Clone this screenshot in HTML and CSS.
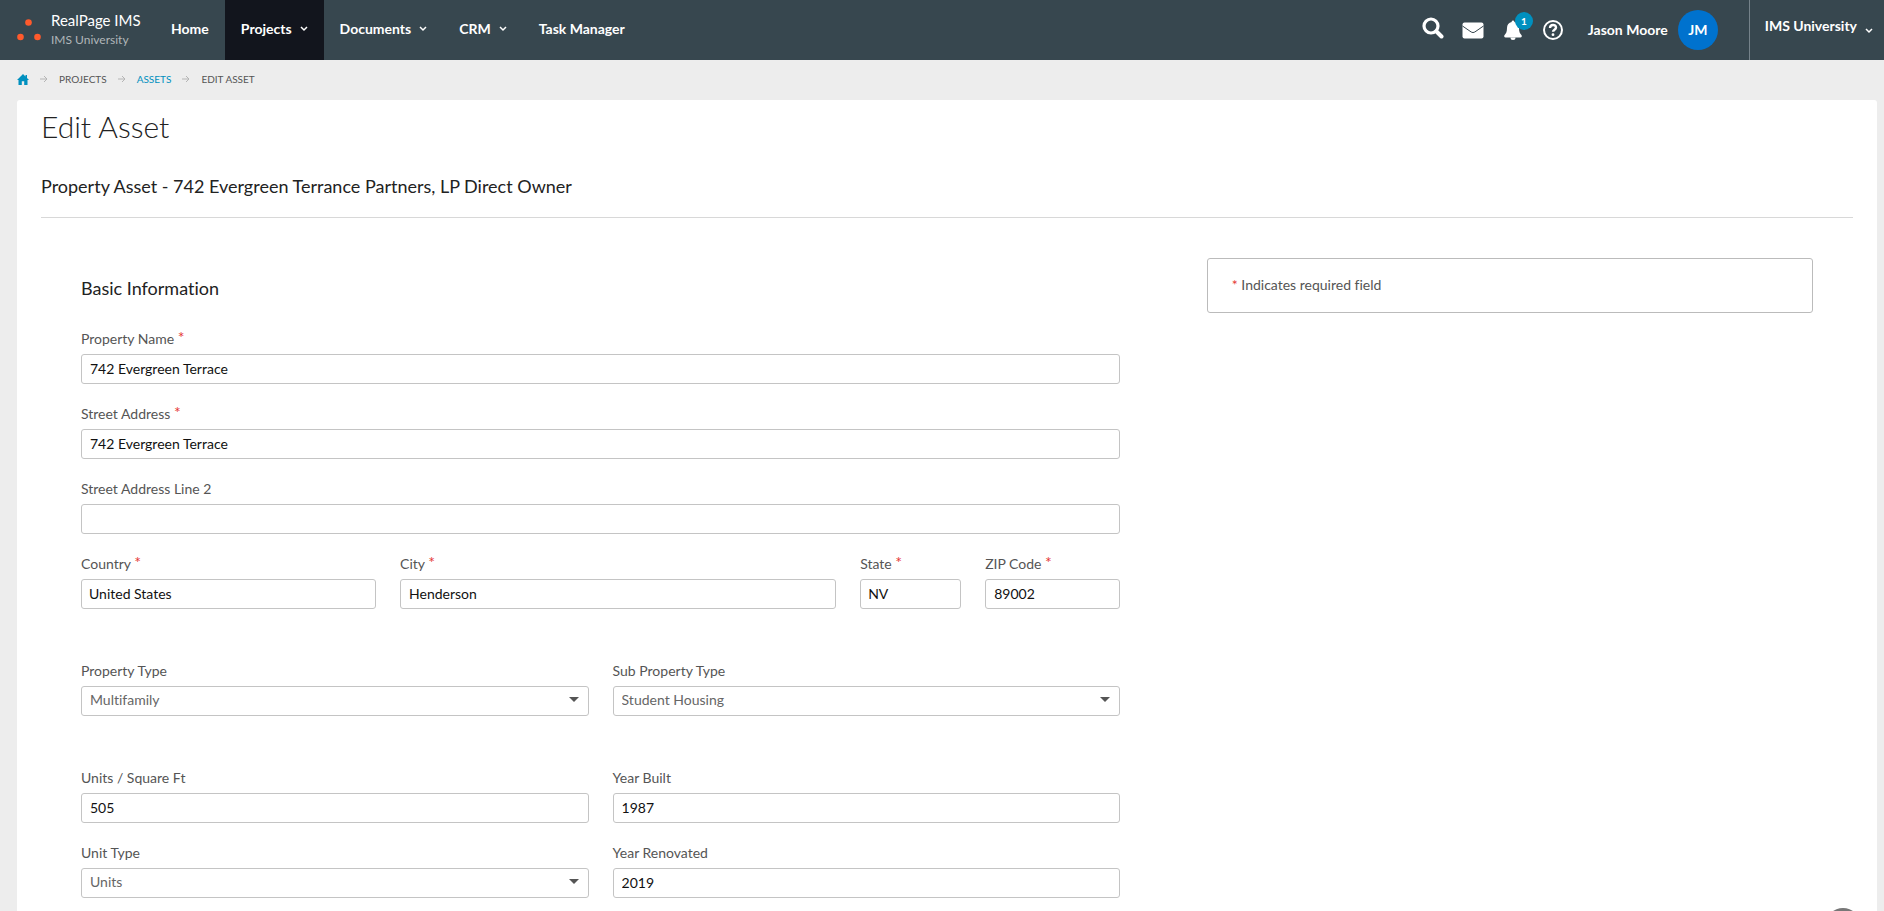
FILE: index.html
```html
<!DOCTYPE html>
<html lang="en">
<head>
    <meta charset="UTF-8">
    <meta name="viewport" content="width=device-width, initial-scale=1.0">
    <title>Edit Asset</title>
    <link rel="stylesheet" href="styles.css">
</head>
<body>

    <header class="topbar">
        <a class="brand" href="#">
            <svg class="brand-logo" width="24" height="24" viewBox="0 0 24 24" fill="#ff5a2c">
                <circle cx="11.5" cy="4.5" r="3.3"/>
                <circle cx="3.5" cy="19" r="3.3"/>
                <circle cx="20.5" cy="19" r="3.3"/>
            </svg>
            <span class="brand-text">
                <span class="brand-name">RealPage IMS</span>
                <span class="brand-sub">IMS University</span>
            </span>
        </a>

        <nav class="main-nav">
            <a class="nav-link" href="#">Home</a>
            <a class="nav-link active" href="#">Projects
                <svg class="chevron" width="8" height="6" viewBox="0 0 8 6"><path d="M1 1l3 3 3-3"/></svg>
            </a>
            <a class="nav-link" href="#">Documents
                <svg class="chevron" width="8" height="6" viewBox="0 0 8 6"><path d="M1 1l3 3 3-3"/></svg>
            </a>
            <a class="nav-link" href="#">CRM
                <svg class="chevron" width="8" height="6" viewBox="0 0 8 6"><path d="M1 1l3 3 3-3"/></svg>
            </a>
            <a class="nav-link" href="#">Task Manager</a>
        </nav>

        <div class="tools">
            <button class="icon-btn search" type="button" aria-label="Search">
                <svg width="22" height="22" viewBox="0 0 22 22" fill="none" stroke="#fff">
                    <circle cx="9" cy="9" r="7" stroke-width="3.2"/>
                    <path d="M14.5 14.5l5 5" stroke-width="4" stroke-linecap="round"/>
                </svg>
            </button>
            <button class="icon-btn" type="button" aria-label="Messages">
                <svg width="22" height="22" viewBox="0 0 22 22">
                    <rect x="0.5" y="3.5" width="21" height="16" rx="2" fill="#fff"/>
                    <path d="M0.5 7l8.7 6q1.800 1.200 3.600 0l8.700-6" fill="none" stroke="#37474f"/>
                </svg>
            </button>
            <button class="icon-btn" type="button" aria-label="Notifications">
                <svg width="22" height="22" viewBox="0 0 22 22" fill="#fff">
                    <path d="M11 1.500a1.300 1.300 0 0 0-1.300 1.600C6.800 3.700 5 6 5 9c0 4-1 5.500-2.400 7-.9 1-.3 2.500 1 2.500h14.800c1.300 0 1.900-1.500 1-2.500C18 14.500 17 13 17 9c0-3-1.800-5.300-4.700-5.900A1.300 1.300 0 0 0 11 1.500z"/>
                    <path d="M8.500 18.500h5a2.500 2.500 0 0 1-5 0z"/>
                </svg>
                <span class="badge">1</span>
            </button>
            <button class="icon-btn" type="button" aria-label="Help">
                <svg width="22" height="22" viewBox="0 0 22 22" fill="none" stroke="#fff">
                    <circle cx="11" cy="11" r="9" stroke-width="2"/>
                    <path d="M8 9c0-4 6-4 6-.5 0 2.200-3 2.200-3 4.300" stroke-width="2.4"/>
                    <circle cx="11" cy="15.700" r="1.4" fill="#fff" stroke="none"/>
                </svg>
            </button>
            <a class="user" href="#">Jason Moore <span class="avatar">JM</span></a>
            <a class="org" href="#">IMS University
                <svg class="chevron" width="8" height="6" viewBox="0 0 8 6"><path d="M1 1l3 3 3-3"/></svg>
            </a>
        </div>
    </header>

    <nav class="breadcrumb" aria-label="Breadcrumb">
        <a href="#" aria-label="Home page">
            <svg width="12" height="11" viewBox="0 0 12 11" fill="#0090bf"><path d="M6 0l2.500 2.400V1h1.500v2.900L12 6h-1.500v5H7.200V7.200H4.800V11H1.500V6H0z"/></svg>
        </a>
        <svg class="arrow" width="8" height="8" viewBox="0 0 8 8"><path d="M0 4h7M4 1l3 3-3 3"/></svg>
        <span>PROJECTS</span>
        <svg class="arrow" width="8" height="8" viewBox="0 0 8 8"><path d="M0 4h7M4 1l3 3-3 3"/></svg>
        <a href="#">ASSETS</a>
        <svg class="arrow" width="8" height="8" viewBox="0 0 8 8"><path d="M0 4h7M4 1l3 3-3 3"/></svg>
        <span>EDIT ASSET</span>
    </nav>

    <main class="card">
        <h1>Edit Asset</h1>
        <h2 class="subtitle">Property Asset - 742 Evergreen Terrance Partners, LP Direct Owner</h2>

        <div class="content">
            <form class="asset-form">
                <h3>Basic Information</h3>

                <div class="field">
                    <label for="name">Property Name <span class="req">*</span></label>
                    <input type="text" id="name" value="742 Evergreen Terrace">
                </div>
                <div class="field">
                    <label for="street">Street Address <span class="req">*</span></label>
                    <input type="text" id="street" value="742 Evergreen Terrace">
                </div>
                <div class="field">
                    <label for="street2">Street Address Line 2</label>
                    <input type="text" id="street2">
                </div>

                <div class="row location">
                    <div class="field">
                        <label for="country">Country <span class="req">*</span></label>
                        <input type="text" id="country" class="compact" value="United States">
                    </div>
                    <div class="field">
                        <label for="city">City <span class="req">*</span></label>
                        <input type="text" id="city" value="Henderson">
                    </div>
                    <div class="field">
                        <label for="state">State <span class="req">*</span></label>
                        <input type="text" id="state" class="compact" value="NV">
                    </div>
                    <div class="field">
                        <label for="zip">ZIP Code <span class="req">*</span></label>
                        <input type="text" id="zip" value="89002">
                    </div>
                </div>

                <div class="row halves group">
                    <div class="field">
                        <label for="type">Property Type</label>
                        <div class="select">
                            <select id="type"><option>Multifamily</option></select>
                        </div>
                    </div>
                    <div class="field">
                        <label for="subtype">Sub Property Type</label>
                        <div class="select">
                            <select id="subtype"><option>Student Housing</option></select>
                        </div>
                    </div>
                </div>

                <div class="row halves group">
                    <div class="field">
                        <label for="units">Units / Square Ft</label>
                        <input type="text" id="units" value="505">
                    </div>
                    <div class="field">
                        <label for="built">Year Built</label>
                        <input type="text" id="built" value="1987">
                    </div>
                    <div class="field">
                        <label for="unittype">Unit Type</label>
                        <div class="select">
                            <select id="unittype"><option>Units</option></select>
                        </div>
                    </div>
                    <div class="field">
                        <label for="renovated">Year Renovated</label>
                        <input type="text" id="renovated" value="2019">
                    </div>
                </div>
            </form>

            <aside class="note"><span class="req">*</span> Indicates required field</aside>
        </div>
    </main>

    <button class="chat" type="button" aria-label="Chat"></button>

</body>
</html>
```

FILE: styles.css
```css
* {
    box-sizing: border-box;
}

body {
    margin: 0;
    background-color: #ededed;
    color: #555;
    font-family: Lato, "Open Sans", sans-serif;
    font-size: 14px;
    line-height: 20px;
    font-variant-ligatures: none;
}

a {
    color: inherit;
    text-decoration: none;
}

/* Top bar */
.topbar {
    display: flex;
    height: 60px;
    background-color: #37474f;
    color: #fff;
}

.brand {
    display: flex;
    align-items: center;
    gap: 10px;
    padding-left: 17px;
}

.brand-text {
    display: flex;
    flex-direction: column;
    width: 104px;
}

.brand-name {
    font-size: 15px;
    white-space: nowrap;
}

.brand-sub {
    font-size: 12px;
    color: #b0b6b9;
}

.main-nav {
    display: flex;
}

.nav-link {
    display: flex;
    align-items: center;
    gap: 8px;
    padding: 0 16px 2px;
    font-weight: bold;
}

.nav-link.active {
    background-color: #12151d;
}

.chevron {
    flex: none;
    fill: none;
    stroke: #fff;
    stroke-width: 1.5px;
}

.tools {
    display: flex;
    align-items: center;
    margin-left: auto;
}

.icon-btn {
    position: relative;
    display: flex;
    margin-right: 18px;
    padding: 0;
    border: none;
    background: none;
    cursor: pointer;
}

.icon-btn.search {
    margin-bottom: 4px;
}

.badge {
    position: absolute;
    top: -7px;
    right: -9px;
    width: 18px;
    border-radius: 9px;
    background-color: #0090bf;
    color: #fff;
    font: bold 10px/18px Lato, sans-serif;
    text-align: center;
}

.user {
    display: flex;
    align-items: center;
    gap: 10px;
    margin: 0 31px 0 6px;
    font-weight: bold;
}

.avatar {
    width: 40px;
    border-radius: 50%;
    background-color: #0072ce;
    line-height: 40px;
    text-align: center;
}

.org {
    display: flex;
    align-items: center;
    align-self: stretch;
    gap: 8px;
    padding: 0 11px 8px 15px;
    border-left: 1px solid #75828a;
    font-weight: bold;
}

.org .chevron {
    margin-top: 10px;
}

/* Breadcrumb */
.breadcrumb {
    display: flex;
    align-items: center;
    gap: 11px;
    height: 40px;
    padding: 0 0 2px 17px;
    font-size: 10px;
}

.breadcrumb a {
    display: flex;
    color: #0090bf;
}

.arrow {
    fill: none;
    stroke: #b5b5b5;
}

/* Page card */
.card {
    margin: 0 7px 0 17px;
    padding: 10px 24px;
    border-radius: 3px;
    background-color: #fff;
}

h1,
h2,
h3 {
    margin: 0;
    color: #222;
    font-weight: normal;
}

h1 {
    font-size: 30px;
    font-weight: 300;
    line-height: 32px;
}

.subtitle {
    margin-top: 32px;
    padding-bottom: 18px;
    border-bottom: 1px solid #d8d8d8;
    font-size: 18px;
    line-height: 25px;
}

h3 {
    font-size: 18px;
    line-height: 20px;
    margin-bottom: 11px;
}

.content {
    display: flex;
    align-items: flex-start;
    justify-content: space-between;
    padding: 40px;
}

.note {
    width: 35%;
    padding: 16px 24px 17px;
    border: 1px solid #bbb;
    border-radius: 3px;
}

/* Form */
.asset-form {
    display: flex;
    flex-direction: column;
    gap: 20px;
    width: 60%;
    padding-top: 20px;
}

.row {
    display: grid;
    gap: 20px 24px;
}

.location {
    grid-template-columns: 295fr 436fr 101fr 135fr;
}

.halves {
    grid-template-columns: 1fr 1fr;
}

.group {
    margin-top: 32px;
}

.field {
    display: flex;
    flex-direction: column;
    gap: 5px;
    min-width: 0;
}

.req {
    color: #e53935;
}

label .req {
    font-size: 16px;
    vertical-align: 1px;
    line-height: 1;
}

input,
select {
    width: 100%;
    height: 30px;
    padding: 0 8px 2px;
    border: 1px solid #c4c4c4;
    border-radius: 3px;
    background-color: #fff;
    color: #111;
    font: inherit;
}

input.compact {
    padding: 0 7px 2px;
}

select {
    appearance: none;
    color: #666;
}

.select {
    position: relative;
}

.select::after {
    content: "";
    position: absolute;
    top: 11px;
    right: 10px;
    border: 5px solid transparent;
    border-top-color: #555;
    border-bottom: none;
    pointer-events: none;
}

/* Floating chat button */
.chat {
    position: fixed;
    right: 24px;
    bottom: -31px;
    width: 34px;
    height: 34px;
    border: none;
    border-radius: 50%;
    background-color: #777;
}
```
